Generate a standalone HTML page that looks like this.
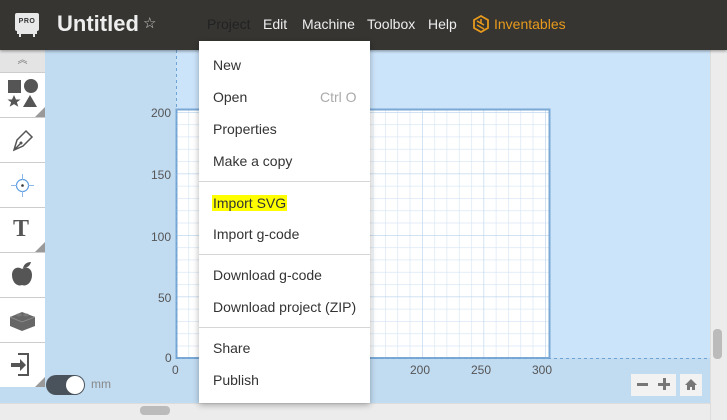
<!DOCTYPE html>
<html><head><meta charset="utf-8"><style>
*{margin:0;padding:0;box-sizing:border-box}
body{width:727px;height:420px;overflow:hidden;position:relative;font-family:"Liberation Sans",sans-serif;background:#c1dbf1}
.hdr{position:absolute;left:0;top:0;width:727px;height:50px;background:#363532;box-shadow:0 1px 3px rgba(0,0,0,.4);z-index:5}
.nav{position:absolute;top:16px;font-size:14px;color:#eee}
.side{position:absolute;left:0;top:50px;width:45px;height:337px;background:#fff;z-index:2}
.cell{position:absolute;left:0;width:45px;border-bottom:1px solid #ccc}
.tri{position:absolute;right:0;bottom:0;width:0;height:0;border-left:10px solid transparent;border-bottom:10px solid #999}
.menu{position:absolute;left:199px;top:41px;width:171px;height:362px;background:#fff;box-shadow:0 2px 6px rgba(0,0,0,.3);z-index:6}
.mi{position:absolute;left:14px;font-size:14px;color:#333}
.sep{position:absolute;left:0;width:171px;height:1px;background:#d6d6d6}
.lbl{position:absolute;font-size:12px;color:#555}
</style></head><body>
<div style="position:absolute;left:45px;top:50px;width:665px;height:353px;background:#c1dbf1"></div>
<div style="position:absolute;left:176px;top:50px;width:534px;height:308px;background:#cce4fa"></div>
<svg style="position:absolute;left:0;top:0" width="727" height="420">
<defs>
<pattern id="g" x="176" y="358" width="12.3" height="12.3" patternUnits="userSpaceOnUse">
<path d="M0 0H12.3M0 0V12.3" stroke="#d3e3f3" stroke-width="1.2" fill="none"/></pattern>
<pattern id="G" x="176" y="358" width="61.5" height="61.5" patternUnits="userSpaceOnUse">
<path d="M0 0H61.5M0 0V61.5" stroke="#bcd4ec" stroke-width="1.2" fill="none"/></pattern>
</defs>
<rect x="176.5" y="109.5" width="373" height="248.5" fill="#fff"/>
<rect x="176.5" y="109.5" width="373" height="248.5" fill="url(#g)"/>
<rect x="176.5" y="109.5" width="373" height="248.5" fill="url(#G)"/>
<rect x="176.5" y="109.5" width="373" height="248.5" fill="none" stroke="#7aa9d6" stroke-width="2"/>
<line x1="176.5" y1="50" x2="176.5" y2="358" stroke="#6fa3d6" stroke-dasharray="3,3"/>
<line x1="176" y1="358.5" x2="710" y2="358.5" stroke="#6fa3d6" stroke-dasharray="3,3"/>
</svg>
<div class="lbl" style="left:151px;top:106px">200</div>
<div class="lbl" style="left:151px;top:168px">150</div>
<div class="lbl" style="left:151px;top:230px">100</div>
<div class="lbl" style="left:158px;top:291px">50</div>
<div class="lbl" style="left:165px;top:351px">0</div>
<div class="lbl" style="left:172px;top:363px">0</div>
<div class="lbl" style="left:410px;top:363px">200</div>
<div class="lbl" style="left:471px;top:363px">250</div>
<div class="lbl" style="left:532px;top:363px">300</div>

<div class="hdr">
<div style="position:absolute;left:15px;top:13px;width:24px;height:18px;background:#e8e8e8;border-radius:2px;font-size:7px;font-weight:bold;color:#333;text-align:center;line-height:18px;letter-spacing:.5px">PRO</div>
<div style="position:absolute;left:17px;top:31px;width:20px;height:3px;background:#e8e8e8"></div>
<div style="position:absolute;left:19px;top:33px;width:2px;height:4px;background:#e8e8e8"></div>
<div style="position:absolute;left:33px;top:33px;width:2px;height:4px;background:#e8e8e8"></div>
<div style="position:absolute;left:57px;top:11px;font-size:22px;font-weight:bold;color:#eee">Untitled</div>
<div style="position:absolute;left:143px;top:14px;font-size:15px;color:#ccc">☆</div>
<div class="nav" style="left:207px;color:#222">Project</div>
<div class="nav" style="left:263px">Edit</div>
<div class="nav" style="left:302px">Machine</div>
<div class="nav" style="left:367px">Toolbox</div>
<div class="nav" style="left:428px">Help</div>
<svg style="position:absolute;left:473px;top:15px" width="16" height="18" viewBox="0 0 16 18"><path d="M8 1L15 5V13L8 17L1 13V5Z" fill="none" stroke="#e89a1c" stroke-width="1.8"/><path d="M4 6L11 10M4 10L11 14M8 4V9" stroke="#e89a1c" stroke-width="1.5"/></svg>
<div class="nav" style="left:494px;color:#e89a1c">Inventables</div>
</div>

<div class="side">
<div class="cell" style="top:0;height:23px;background:#e4e4e4;text-align:center;font-size:10px;color:#777;line-height:22px">︽</div>
<div class="cell" style="top:23px;height:45px">
<svg width="45" height="45"><rect x="8" y="7" width="13" height="13" fill="#555"/><circle cx="31" cy="13" r="7" fill="#555"/><path d="M14 22l2 4.5h4.5l-3.6 2.8 1.4 4.5-4.3-2.7-4.3 2.7 1.4-4.5-3.6-2.8h4.5z" fill="#555"/><path d="M30 22l7 12h-14z" fill="#555"/></svg><div class="tri"></div></div>
<div class="cell" style="top:68px;height:45px">
<svg width="45" height="45"><path d="M14 32l3-10 9-9 6 6-9 9z M14 32l7-7" fill="none" stroke="#555" stroke-width="1.5"/><circle cx="21" cy="25" r="1.5" fill="#555"/></svg></div>
<div class="cell" style="top:113px;height:45px">
<svg width="45" height="45"><circle cx="22.5" cy="22.5" r="6" fill="none" stroke="#5a9be0" stroke-width="1.2"/><circle cx="22.5" cy="22.5" r="1.3" fill="#333"/><path d="M22.5 11v6M22.5 28v6M11 22.5h6M28 22.5h6" stroke="#8bb8e8" stroke-width="1"/></svg></div>
<div class="cell" style="top:158px;height:45px"><div style="position:absolute;left:13px;top:8px;font-family:'Liberation Serif',serif;font-weight:bold;font-size:24px;color:#555">T</div><div class="tri"></div></div>
<div class="cell" style="top:203px;height:45px">
<svg width="45" height="45"><path d="M22 16c-4-3-10-1-10 6 0 7 5 12 10 10 5 2 10-3 10-10 0-7-6-9-10-6z" fill="#555"/><path d="M23 15c1-4 4-6 8-6-1 4-4 6-8 6z" fill="#555"/></svg></div>
<div class="cell" style="top:248px;height:45px">
<svg width="45" height="45"><path d="M10 19l12-5 13 5v9l-13 5-12-5z" fill="#666"/><path d="M10 19l12 5 13-5" fill="none" stroke="#888"/><ellipse cx="19" cy="17" rx="3" ry="1.5" fill="#777"/><ellipse cx="26" cy="17" rx="3" ry="1.5" fill="#777"/></svg></div>
<div class="cell" style="top:293px;height:44px;border-bottom:none">
<svg width="45" height="44"><path d="M18 11h10v21h-10" fill="none" stroke="#555" stroke-width="2"/><path d="M11 20h9v-4l6 6-6 6v-4h-9z" fill="#555"/></svg><div class="tri"></div></div>
</div>
<div style="position:absolute;left:46px;top:375px;width:39px;height:20px;border-radius:10px;background:#4a535b"></div>
<div style="position:absolute;left:66px;top:376px;width:18px;height:18px;border-radius:9px;background:#fff"></div>
<div style="position:absolute;left:91px;top:377px;font-size:12px;color:#888">mm</div>

<div style="position:absolute;left:631px;top:374px;width:45px;height:22px;background:#f2f2f2"></div>
<div style="position:absolute;left:637px;top:383px;width:11px;height:3px;background:#777"></div>
<div style="position:absolute;left:658px;top:383px;width:12px;height:3px;background:#777"></div>
<div style="position:absolute;left:662.5px;top:378px;width:3px;height:12px;background:#777"></div>
<div style="position:absolute;left:680px;top:374px;width:22px;height:22px;background:#f2f2f2"></div>
<svg style="position:absolute;left:684px;top:378px" width="14" height="13"><path d="M7 1L1 7h2v5h3v-3h2v3h3V7h2z" fill="#777"/></svg>

<div style="position:absolute;left:710px;top:0;width:17px;height:420px;background:#ececec;border-left:1px solid #ddd"></div>
<div style="position:absolute;left:713px;top:329px;width:9px;height:30px;border-radius:4px;background:#bbb"></div>
<div style="position:absolute;left:0;top:403px;width:710px;height:17px;background:#ececec;border-top:1px solid #ddd"></div>
<div style="position:absolute;left:140px;top:406px;width:30px;height:9px;border-radius:4px;background:#bbb"></div>

<div class="menu">
<div class="mi" style="top:16px">New</div>
<div class="mi" style="top:48px">Open</div>
<div class="mi" style="top:48px;left:121px;color:#aaa">Ctrl O</div>
<div class="mi" style="top:80px">Properties</div>
<div class="mi" style="top:112px">Make a copy</div>
<div class="sep" style="top:140px"></div>
<div class="mi" style="top:154px;background:#ffff00;left:13px;padding:0 1px">Import SVG</div>
<div class="mi" style="top:185px">Import g-code</div>
<div class="sep" style="top:213px"></div>
<div class="mi" style="top:226px">Download g-code</div>
<div class="mi" style="top:258px">Download project (ZIP)</div>
<div class="sep" style="top:286px"></div>
<div class="mi" style="top:299px">Share</div>
<div class="mi" style="top:331px">Publish</div>
</div>
</body></html>
